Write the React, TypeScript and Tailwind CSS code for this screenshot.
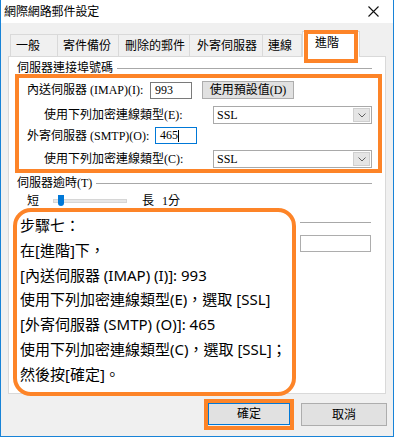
import React from 'react';

const orange = 'border-[#fd8428]';

function Tab({ label, w, pl, last }: { label: string; w: string; pl: string; last?: boolean }) {
  return (
    <div
      className={`${w} ${pl} h-[22px] border-l border-t ${last ? 'border-r' : ''} border-[#d9d9d9] bg-[#f0f0f0] text-[12px] leading-[21px] text-black whitespace-nowrap`}
    >
      {label}
    </div>
  );
}

function Select({ value }: { value: string }) {
  return (
    <div className="w-[159px] h-[18px] border border-[#a9a9a9] bg-white flex items-center justify-between pl-[3px] pr-[1px]">
      <span className="font-['Liberation_Serif','Noto_Sans_CJK_TC',serif] text-[12px] leading-none">{value}</span>
      <span className="w-[17px] h-[14px] bg-[#e5e5e5] border border-[#cfcfcf] flex items-center justify-center">
        <svg width="8" height="5" viewBox="0 0 8 5">
          <path d="M0.5 0.5 L4 4 L7.5 0.5" fill="none" stroke="#606060" strokeWidth="1" />
        </svg>
      </span>
    </div>
  );
}

export default function App() {
  const steps = [
    '步驟七：',
    '在[進階]下，',
    '[內送伺服器 (IMAP) (I)]: 993',
    '使用下列加密連線類型(E)，選取 [SSL]',
    '[外寄伺服器 (SMTP) (O)]: 465',
    '使用下列加密連線類型(C)，選取 [SSL]；',
    '然後按[確定]。',
  ];

  return (
    <div className="w-[396px] h-[437px] bg-white font-['Noto_Sans','Noto_Sans_CJK_TC',sans-serif] text-black">
      <div className="w-[394px] h-[437px] border-x border-b border-[#1883d7] bg-[#f0f0f0] flex flex-col">
        {/* title bar */}
        <div className="h-[23px] bg-white flex items-center justify-between pl-[3px] pr-[14px] shrink-0">
          <span className="text-[12px] leading-none tracking-[-0.1px]">網際網路郵件設定</span>
          <svg width="11" height="11" viewBox="0 0 11 11">
            <path d="M0.5 0.5 L10.5 10.5 M10.5 0.5 L0.5 10.5" stroke="#111" strokeWidth="1.1" />
          </svg>
        </div>

        {/* tabs */}
        <div className="mt-[8px] ml-[9px] h-[25px] flex items-end shrink-0 relative z-10">
          <Tab label="一般" w="w-[47px]" pl="pl-[5px]" />
          <Tab label="寄件備份" w="w-[61px]" pl="pl-[5px]" />
          <Tab label="刪除的郵件" w="w-[71px]" pl="pl-[6px]" />
          <Tab label="外寄伺服器" w="w-[73px]" pl="pl-[7px]" />
          <Tab label="連線" w="w-[40px]" pl="pl-[5px]" last />
          <div className="relative w-[58px] h-[26px] -mb-px border-x border-t border-[#d9d9d9] bg-white pl-[12px] text-[12px] leading-[22px]">
            進階
            <div className={`absolute left-[1px] top-[-2px] w-[54px] h-[33px] border-4 ${orange}`} />
          </div>
        </div>

        {/* panel */}
        <div className="ml-[7px] w-[378px] h-[338px] border border-[#d9d9d9] bg-white relative shrink-0 pt-[4px] text-[12px]">
          <div className="h-[14px] flex items-center pl-[8px] pr-[13px]">
            <span className="leading-none">伺服器連接埠號碼</span>
            <div className="flex-1 h-px bg-[#a8a8a8] ml-[4px]" />
          </div>

          <div className={`ml-[6px] -mt-px w-[367px] border-4 ${orange} pt-[3px] pb-px`}>
            <div className="h-[18px] flex items-center pl-[8px]">
              <span className="w-[123px] font-['Liberation_Serif','Noto_Sans_CJK_TC',serif] leading-none whitespace-nowrap">
                內送伺服器 (IMAP)(I):
              </span>
              <div className="w-[42px] h-[17px] border border-[#7a7a7a] bg-white pl-[4px] font-['Liberation_Serif','Noto_Sans_CJK_TC',serif] leading-[15px]">
                993
              </div>
              <div className="ml-[10px] w-[92px] h-[18px] bg-[#e1e1e1] border border-[#adadad] text-center font-['Liberation_Serif','Noto_Sans_CJK_TC',serif] leading-[16px]">
                使用預設值(D)
              </div>
            </div>
            <div className="mt-[7px] h-[18px] flex items-center pl-[25px]">
              <span className="w-[169px] font-['Liberation_Serif','Noto_Sans_CJK_TC',serif] leading-none whitespace-nowrap">
                使用下列加密連線類型(E):
              </span>
              <Select value="SSL" />
            </div>
            <div className="mt-[3px] h-[17px] flex items-center pl-[8px]">
              <span className="w-[128px] font-['Liberation_Serif','Noto_Sans_CJK_TC',serif] leading-none whitespace-nowrap">
                外寄伺服器 (SMTP)(O):
              </span>
              <div className="w-[42px] h-[17px] border border-[#0078d7] bg-white pl-[4px] font-['Liberation_Serif','Noto_Sans_CJK_TC',serif] leading-[15px] flex items-center">
                465<span className="w-px h-[12px] bg-black" />
              </div>
            </div>
            <div className="mt-[6px] h-[18px] flex items-center pl-[25px]">
              <span className="w-[169px] font-['Liberation_Serif','Noto_Sans_CJK_TC',serif] leading-none whitespace-nowrap">
                使用下列加密連線類型(C):
              </span>
              <Select value="SSL" />
            </div>
          </div>

          <div className="mt-[3px] h-[14px] flex items-center pl-[8px] pr-[13px]">
            <span className="font-['Liberation_Serif','Noto_Sans_CJK_TC',serif] leading-none">伺服器逾時(T)</span>
            <div className="flex-1 h-px bg-[#a8a8a8] ml-[4px]" />
          </div>

          <div className="mt-[4px] h-[14px] flex items-center pl-[18px]">
            <span className="leading-none">短</span>
            <div className="ml-[14px] w-[74px] h-[4px] bg-[#e7e7e7] border border-[#d6d6d6] relative">
              <div className="absolute left-[4px] top-[-5px] w-[6px] h-[11px] bg-[#0078d7] rounded-b-[3px]" />
            </div>
            <span className="ml-[15px] leading-none">長</span>
            <span className="ml-[8px] leading-none font-['Liberation_Serif','Noto_Sans_CJK_TC',serif]">1分</span>
          </div>

          <div className="mt-[14px] ml-[291px] w-[71px] h-px bg-[#a8a8a8]" />
          <div className="mt-[12px] ml-[291px] w-[71px] h-[17px] border border-[#adadad] bg-white" />

          {/* step note */}
          <div
            className={`absolute left-[4px] top-[151px] w-[283px] h-[188px] border-4 ${orange} rounded-[18px] bg-white pl-[3px] pt-px text-[15px] leading-[24.75px] whitespace-nowrap`}
          >
            {steps.map((s) => (
              <div key={s}>{s}</div>
            ))}
          </div>
        </div>

        {/* buttons */}
        <div className="mt-[9px] flex justify-end pr-[6px] gap-[11px] text-[12px]">
          <div className="relative">
            <div className="w-[82px] h-[22px] bg-[#e1e1e1] border border-[#0078d7] text-center leading-[20px]">確定</div>
            <div className={`absolute -inset-[4px] border-4 ${orange}`} />
          </div>
          <div className="w-[86px] h-[23px] bg-[#e1e1e1] border border-[#adadad] text-center leading-[21px]">取消</div>
        </div>
      </div>
    </div>
  );
}
